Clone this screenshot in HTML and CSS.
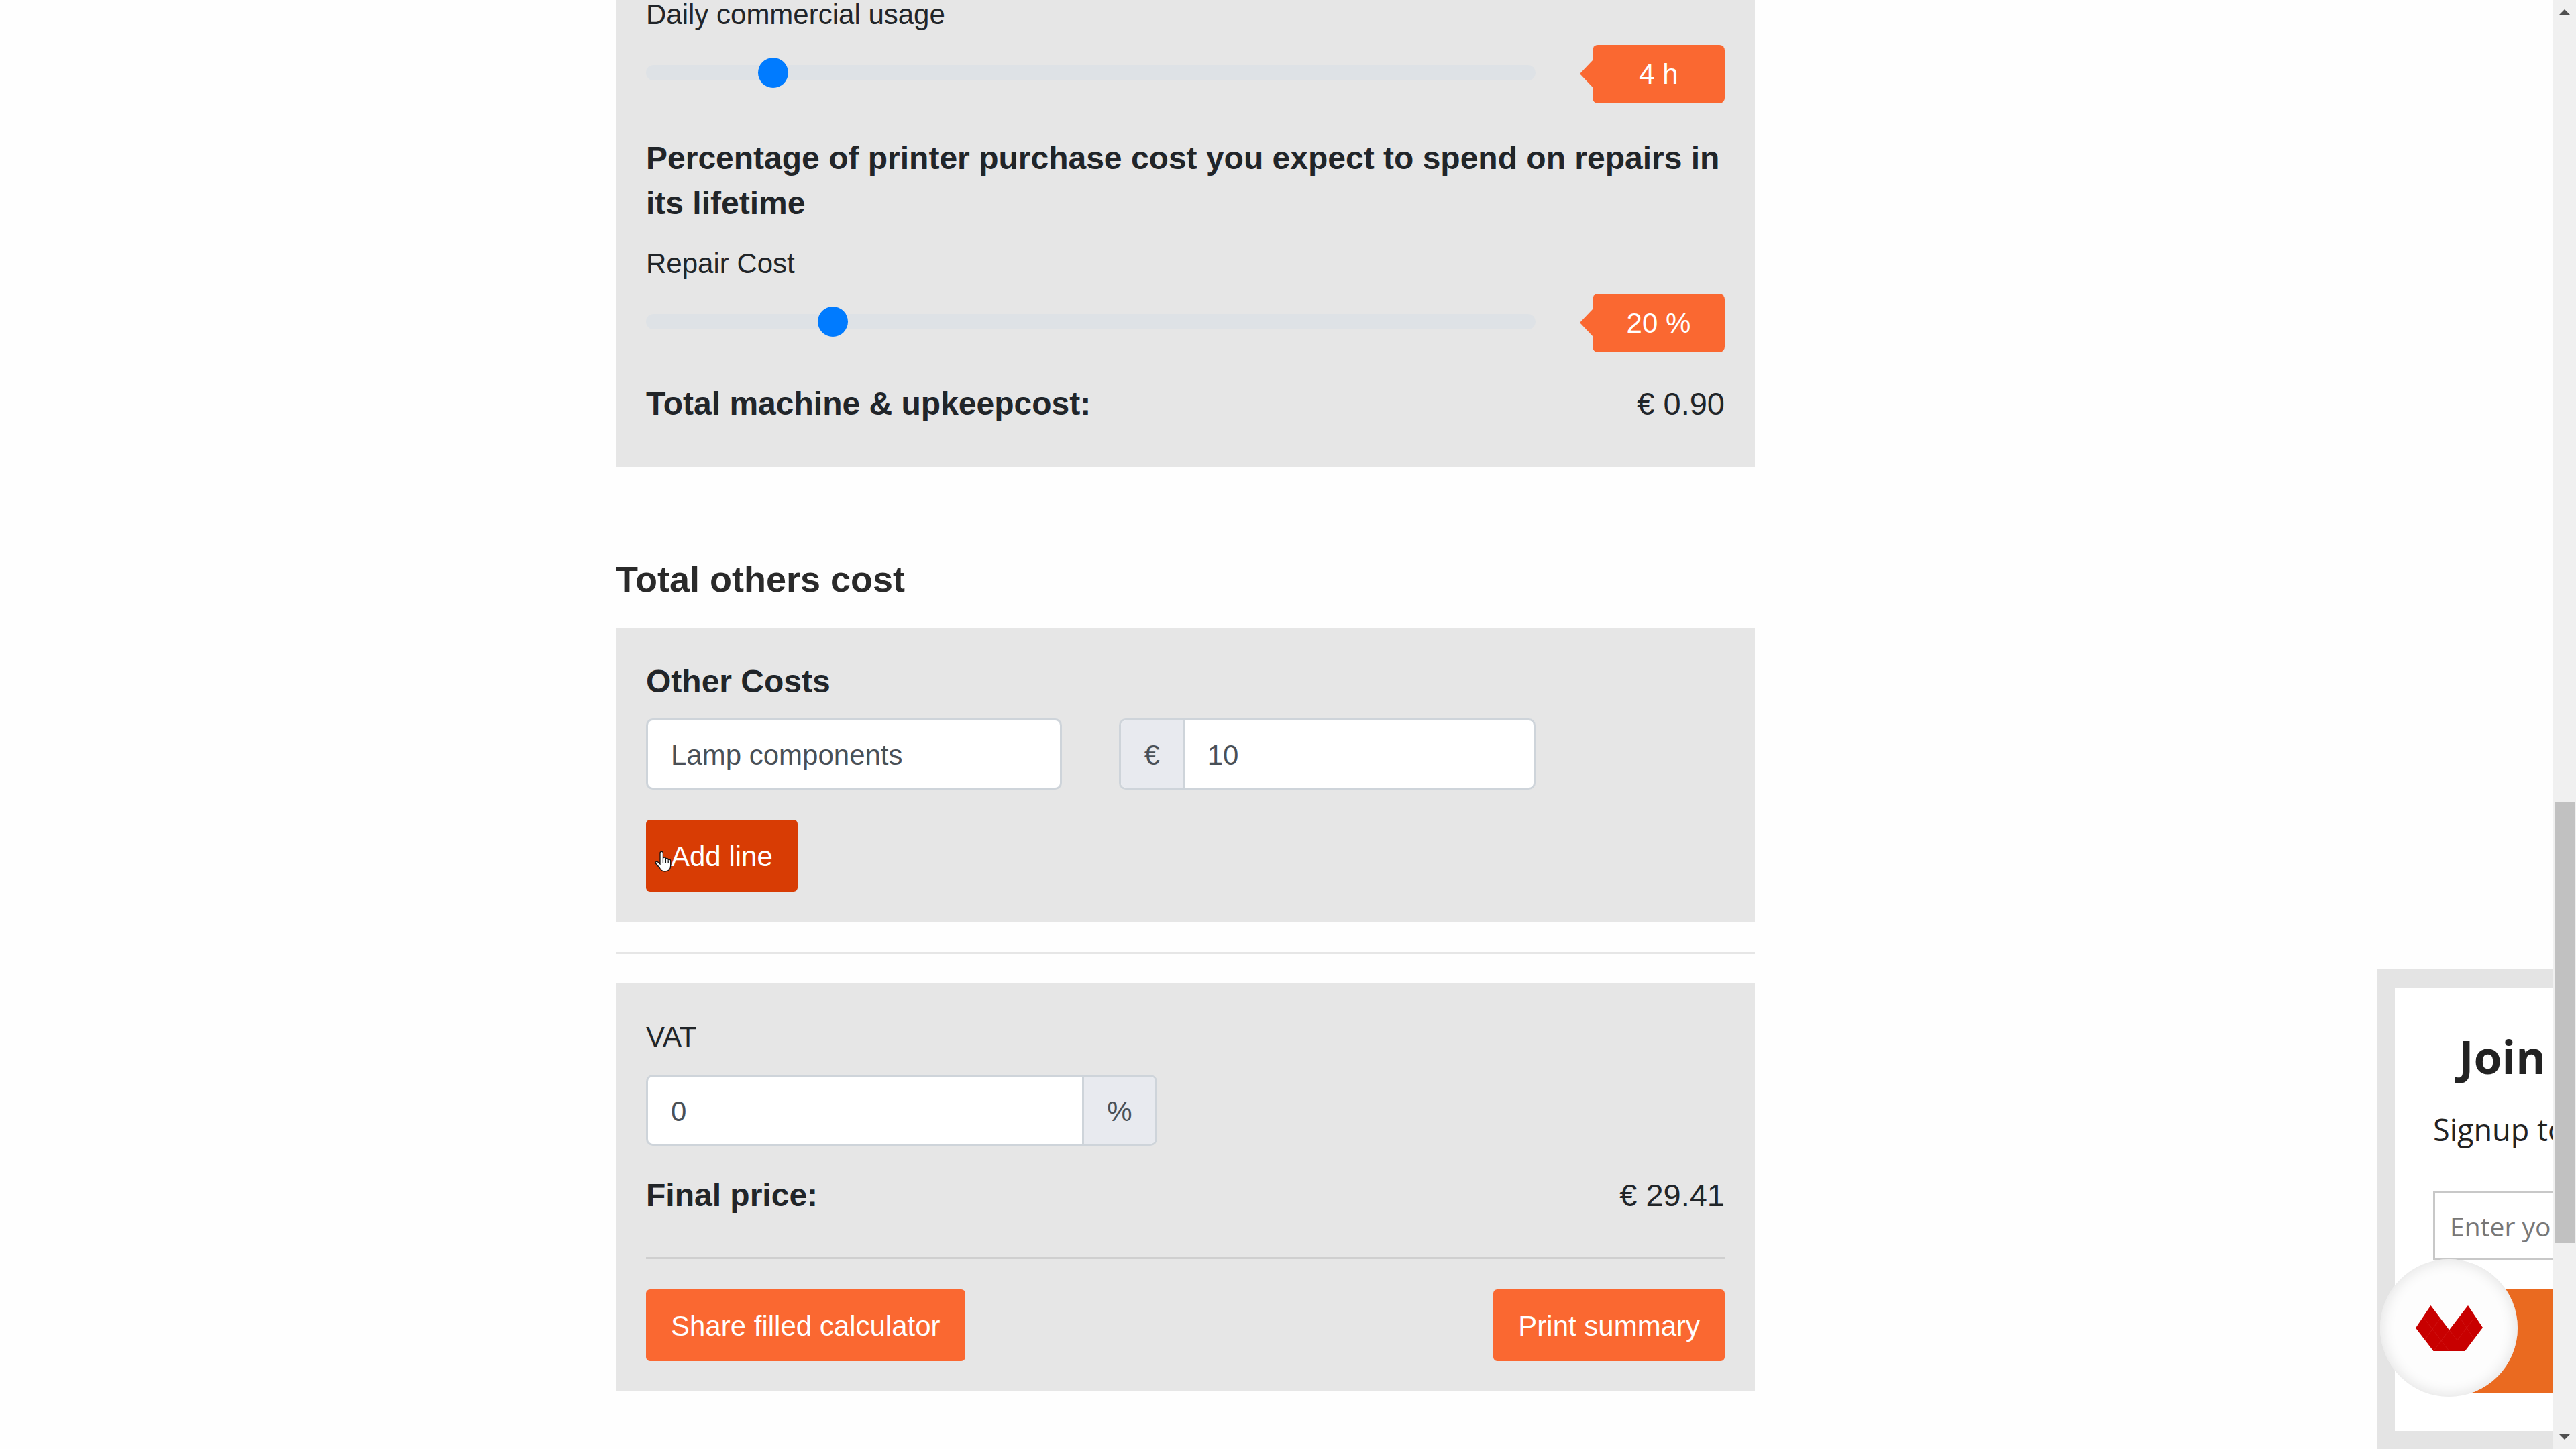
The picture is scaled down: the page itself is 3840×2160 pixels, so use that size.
FILE: index.html
```html
<!DOCTYPE html>
<html lang="en">
<head>
<meta charset="utf-8">
<meta name="viewport" content="width=device-width, initial-scale=1">
<title>3D printing cost calculator</title>
<link rel="stylesheet" href="styles.css">
</head>
<body>
<main class="page">
  <form class="calculator">
    <section class="panel panel--continued">
      <label class="label" for="usage">Daily commercial usage</label>
      <div class="grid slider-row">
        <input class="slider" id="usage" type="range" min="1" max="24" value="4">
        <output class="badge" for="usage">4 h</output>
      </div>
      <h3 class="heading heading--question">Percentage of printer purchase cost you expect to spend on repairs in its lifetime</h3>
      <label class="label" for="repair">Repair Cost</label>
      <div class="grid slider-row">
        <input class="slider" id="repair" type="range" min="0" max="100" value="20">
        <output class="badge" for="repair">20 %</output>
      </div>
      <div class="total total--machine">
        <h3 class="heading">Total machine &amp; upkeepcost:</h3>
        <span class="price">€ 0.90</span>
      </div>
    </section>

    <h2 class="title">Total others cost</h2>
    <section class="panel">
      <h3 class="heading">Other Costs</h3>
      <div class="grid fields">
        <div class="group group--five"><input class="text" type="text" aria-label="Cost name" value="Lamp components"></div>
        <div class="group group--five">
          <label class="addon addon--before" for="amount">€</label>
          <input class="text" id="amount" type="text" value="10">
        </div>
      </div>
      <button class="button button--active" type="button">Add line
        <svg class="pointer" viewBox="0 0 25 32" aria-hidden="true"><path d="M8 20V3.500a2.200 2.200 0 0 1 4.400 0V12c0-2.500 4-2.500 4 0v1c0-2.200 3.800-2 3.800.500v1c0-2 3.500-1.800 3.500.600V22c0 6-3 9-8.500 9-4.500 0-6-2-8-5.500L1.500 19c-1.200-2 1-3.500 3-2.200z" fill="#fff" stroke="#111" stroke-width="1.300"/><path d="M12.400 12v6M16.400 13v5M20.200 14.500v4" stroke="#111" stroke-width="1.300"/></svg>
      </button>
    </section>

    <hr class="rule rule--page">

    <section class="panel">
      <label class="label label--tall" for="vat">VAT</label>
      <div class="grid fields">
        <div class="group group--six">
          <input class="text" id="vat" type="text" value="0">
          <label class="addon addon--after" for="vat">%</label>
        </div>
      </div>
      <div class="total total--final">
        <h3 class="heading">Final price:</h3>
        <span class="price">€ 29.41</span>
      </div>
      <hr class="rule rule--panel">
      <div class="actions">
        <button class="button" type="button">Share filled calculator</button>
        <button class="button" type="button">Print summary</button>
      </div>
    </section>
  </form>
</main>

<aside class="signup">
  <h2 class="signup__title">Join</h2>
  <p class="signup__text">Signup to</p>
  <input class="signup__input" type="email" aria-label="Email" placeholder="Enter yo">
  <button class="signup__button" type="button" aria-label="Sign up"></button>
</aside>

<button class="chat" type="button" aria-label="Open menu">
  <svg class="chat__logo" viewBox="0 0 100 68" aria-hidden="true">
    <path fill="#c80000" d="M22.500 0 50 36.500 78 0 100 33 73.500 68H26.500L0 33.500z"/>
    <path fill="none" stroke="#d42020" stroke-width=".6" d="M12 18 50 68M36 20 13 52M50 36.500 26.500 68M50 36.500 62 52 86 20M66 18 87 50"/>
  </svg>
</button>

<div class="scrollbar" aria-hidden="true">
  <svg class="scrollbar__arrow" viewBox="0 0 16 8"><path fill="#505050" d="M0 8 8 0l8 8z"/></svg>
  <span class="scrollbar__thumb"></span>
  <svg class="scrollbar__arrow" viewBox="0 0 16 8"><path fill="#505050" d="M0 0h16L8 8z"/></svg>
</div>
</body>
</html>
```
FILE: styles.css
```css
*, *::before { box-sizing: border-box; }

body {
  margin: 0;
  background: #fefefe;
  color: #212529;
  font: 42px/44px "Liberation Sans", Arial, sans-serif;
}

input, button { font: inherit; margin: 0; border-radius: 0; }
h2, h3, p { margin: 0; }

.page {
  display: grid;
  grid-template-columns: 918fr 1698fr 1190fr;
  margin-right: 34px;
}

.calculator { grid-column: 2; }

.panel { background: #e6e6e6; padding: 46px 45px 45px; }
.panel--continued { padding-top: 0; padding-bottom: 61px; }

.grid { display: grid; grid-template-columns: repeat(12, 1fr); column-gap: 85px; }

.label { display: block; }
.label--tall { line-height: 68px; }

.heading { font-size: 48px; line-height: 67px; font-weight: 700; }
.heading--question { margin: 48px 0 35px; }

.title {
  margin: 135px 0 41px;
  color: #2a2a2a;
  font-size: 54px;
  line-height: 64px;
}

/* Sliders */
.slider-row { margin-top: 23px; align-items: start; }

.slider {
  grid-column: span 10;
  appearance: none;
  width: 100%;
  height: 82px;
  background: transparent;
}
.slider::-webkit-slider-runnable-track { height: 23px; border-radius: 12px; background: #dee2e6; }
.slider::-webkit-slider-thumb {
  appearance: none;
  width: 45px;
  height: 45px;
  margin-top: -11px;
  border-radius: 50%;
  background: #007bff;
}

.badge {
  grid-column: span 2;
  position: relative;
  border-radius: 8px;
  background: #fa6831;
  color: #fff;
  line-height: 87px;
  text-align: center;
}
.badge::before {
  content: "";
  position: absolute;
  top: 23px;
  right: 100%;
  border: 20px solid transparent;
  border-left-width: 0;
  border-right: 19px solid #fa6831;
}

.total { display: flex; justify-content: space-between; align-items: baseline; }
.total--machine { margin-top: 43px; }
.total--final { margin-top: 40px; }
.price { font-size: 47px; }

/* Fields */
.fields { margin-top: 22px; }

.group {
  display: flex;
  height: 106px;
  border: 3px solid #ced4da;
  border-radius: 10px;
  background: #fff;
  color: #495057;
  overflow: hidden;
}
.group--five { grid-column: span 5; }
.group--six { grid-column: span 6; }

.text {
  flex: 1;
  min-width: 0;
  padding: 3px 34px 0;
  border: 0;
  background: transparent;
  color: inherit;
}

.addon { padding: 0 34px; background: #e8eaef; line-height: 103px; }
.addon--before { border-right: 3px solid #ced4da; }
.addon--after { border-left: 3px solid #ced4da; }

.button {
  position: relative;
  height: 107px;
  padding: 2px 37px 0;
  border: 0;
  border-radius: 6px;
  background: #fa6831;
  color: #fff;
}
.button--active { margin-top: 45px; background: #d83c04; display: block; }

.pointer { position: absolute; left: 13px; top: 46px; width: 25px; height: 32px; }

.rule { height: 3px; border: 0; }
.rule--page { margin: 45px 0 44px; background: #e6e6e6; }
.rule--panel { margin: 59px 0 45px; background: #cfcfcf; }

.actions { display: flex; justify-content: space-between; }

.signup {
  position: fixed;
  right: 34px;
  bottom: 0;
  width: 263px;
  padding: 56px 0 57px 57px;
  border: solid #e4e4e4;
  border-width: 28px 0 27px 27px;
  background: #fff;
  color: #222;
  font-family: "Open Sans", sans-serif;
  white-space: nowrap;
  overflow: hidden;
}
.signup__title { padding-left: 38px; font-size: 68px; line-height: 92px; }
.signup__text { margin-top: 33px; font-size: 45px; line-height: 60px; }
.signup__input {
  display: block;
  width: 100%;
  height: 103px;
  margin-top: 62px;
  padding: 0 0 0 22px;
  border: 3px solid #c8c8c8;
  border-right: 0;
  font-size: 39px;
}
.signup__input::placeholder { color: #777; }
.signup__button {
  display: block;
  width: 100%;
  height: 154px;
  margin-top: 43px;
  border: 0;
  background: #ea6a20;
}

.chat {
  position: fixed;
  right: 87px;
  bottom: 78px;
  display: grid;
  place-items: center;
  width: 205px;
  height: 205px;
  padding: 0;
  border: 0;
  border-radius: 50%;
  background: #fdfdfd;
  box-shadow: inset 0 0 22px #ddd;
}
.chat__logo { width: 100px; height: 68px; }

.scrollbar {
  position: fixed;
  top: 0;
  right: 0;
  bottom: 0;
  display: grid;
  grid-template-rows: 8px 1173fr 657fr 285fr 8px;
  justify-items: center;
  width: 34px;
  padding: 14px 0;
  background: #f0f0f0;
}
.scrollbar__arrow { width: 16px; height: 8px; }
.scrollbar__thumb { grid-row: 3; width: 30px; background: #c1c1c1; }
.scrollbar__arrow:last-child { grid-row: 5; }
```
